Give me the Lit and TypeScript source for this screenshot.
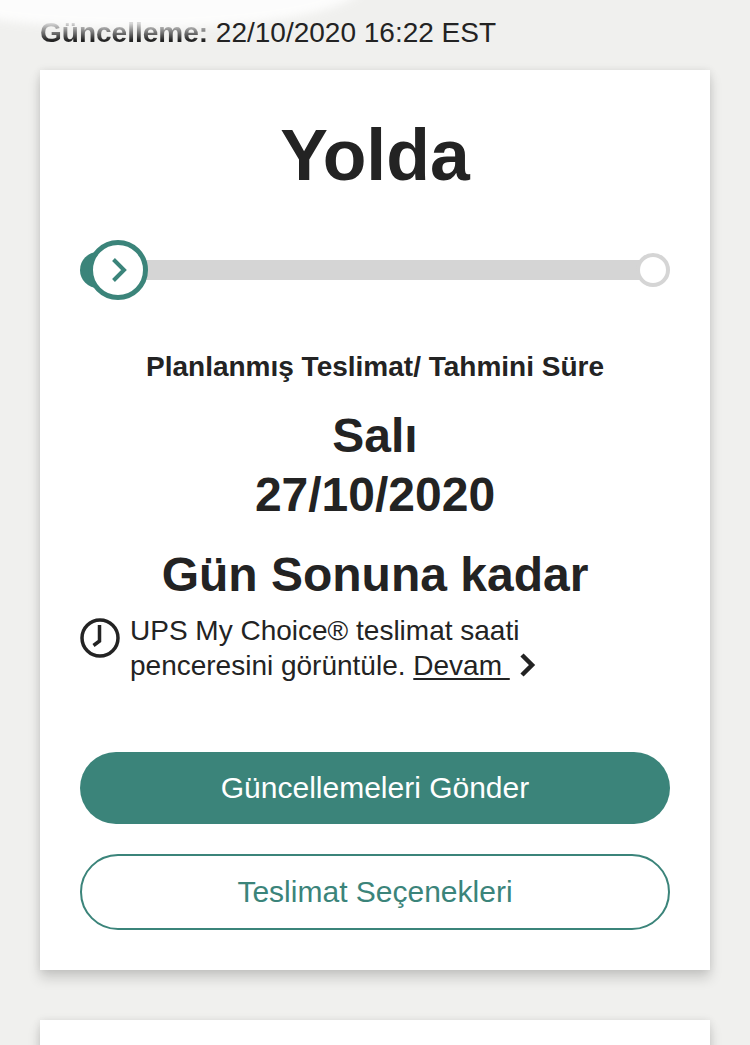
import { LitElement, html, css } from "lit";
import { customElement } from "lit/decorators.js";

@customElement("app-root")
export class AppRoot extends LitElement {
  static styles = css`
    :host {
      display: block;
      position: relative;
      height: 1045px;
      overflow: hidden;
      background: #f0f0ee;
      font-family: "Liberation Sans", Arial, sans-serif;
      color: #232323;
    }
    .smear {
      position: absolute;
      left: -30px;
      top: -30px;
      width: 395px;
      height: 58px;
      background: #fff;
      border-radius: 0 0 70% 60% / 0 0 100% 40%;
      filter: blur(5px);
      opacity: 0.85;
    }
    .updated {
      position: relative;
      padding: 17px 40px 0;
      height: 70px;
      box-sizing: border-box;
      font-size: 28px;
      line-height: 32px;
    }
    .updated b {
      background: linear-gradient(#d8d8d8 20%, #232323 75%);
      -webkit-background-clip: text;
      background-clip: text;
      color: transparent;
    }
    .card {
      background: #fff;
      margin: 0 40px;
      box-shadow: 0 8px 12px rgba(0, 0, 0, 0.16), 0 0 8px rgba(0, 0, 0, 0.08);
    }
    .main {
      height: 900px;
      box-sizing: border-box;
      padding: 45px 40px 0;
      text-align: center;
      position: relative;
    }
    .next {
      height: 60px;
      margin-top: 50px;
    }
    h1 {
      margin: 0;
      font-size: 71.5px;
      line-height: 80px;
      font-weight: 700;
    }
    .progress {
      position: relative;
      height: 60px;
      margin-top: 45px;
      display: flex;
      align-items: center;
    }
    .track {
      flex: 1;
      height: 20px;
      background: #d5d5d5;
      margin: 0 30px 0 10px;
    }
    .start {
      position: absolute;
      left: 0;
      top: 12px;
      width: 36px;
      height: 36px;
      border-radius: 50%;
      background: #3b847a;
    }
    .current {
      position: absolute;
      left: 8px;
      top: 0;
      width: 60px;
      height: 60px;
    }
    .end {
      position: absolute;
      right: 0;
      top: 13px;
      width: 34px;
      height: 34px;
      box-sizing: border-box;
      border-radius: 50%;
      border: 4px solid #d5d5d5;
      background: #fff;
    }
    .label {
      margin-top: 50px;
      font-size: 28px;
      line-height: 34px;
      font-weight: 700;
    }
    .date {
      margin-top: 22px;
      font-size: 48px;
      line-height: 59px;
      font-weight: 700;
    }
    .eod {
      margin-top: 21px;
      font-size: 48px;
      line-height: 59px;
      font-weight: 700;
    }
    .note {
      display: flex;
      gap: 10px;
      margin-top: 9px;
      text-align: left;
      font-size: 28px;
      line-height: 35px;
    }
    .note svg.clock {
      flex: none;
      width: 40px;
      height: 40px;
      margin-top: 5px;
    }
    .note u {
      text-underline-offset: 3px;
      text-decoration-thickness: 2px;
      white-space: pre;
    }
    .chev {
      display: inline-block;
      vertical-align: -3px;
      margin-left: 10px;
      width: 16px;
      height: 26px;
    }
    .btn {
      display: flex;
      align-items: center;
      justify-content: center;
      box-sizing: border-box;
      width: 100%;
      font-size: 30px;
    }
    .primary {
      margin-top: 69px;
      height: 72px;
      border-radius: 36px;
      background: #3b847a;
      color: #fff;
    }
    .secondary {
      margin-top: 30px;
      height: 76px;
      border: 2px solid #3b847a;
      color: #3b847a;
      background: #fff;
      border-radius: 38px;
    }
  `;

  render() {
    return html`
      <div class="smear"></div>
      <div class="updated"><b>Güncelleme:</b> 22/10/2020 16:22 EST</div>
      <div class="card main">
        <h1>Yolda</h1>
        <div class="progress">
          <div class="track"></div>
          <div class="start"></div>
          <svg class="current" viewBox="0 0 60 60">
            <circle cx="30" cy="30" r="27.5" fill="#fff" stroke="#3b847a" stroke-width="5"></circle>
            <path d="M25.5 19.5 L36 30 L25.5 40.5" fill="none" stroke="#3b847a" stroke-width="4"></path>
          </svg>
          <div class="end"></div>
        </div>
        <div class="label">Planlanmış Teslimat/ Tahmini Süre</div>
        <div class="date">Salı<br />27/10/2020</div>
        <div class="eod">Gün Sonuna kadar</div>
        <div class="note">
          <svg class="clock" viewBox="0 0 40 40">
            <circle cx="20" cy="20" r="18" fill="none" stroke="#232323" stroke-width="3.5"></circle>
            <path d="M19.5 7 V23 L13.5 27.5" fill="none" stroke="#232323" stroke-width="3.5"></path>
          </svg>
          <div>
            UPS My Choice® teslimat saati<br />
            penceresini görüntüle. <u>Devam </u><svg class="chev" viewBox="0 0 16 26">
              <path d="M2 3 L12 13 L2 23" fill="none" stroke="#232323" stroke-width="4.5"></path>
            </svg>
          </div>
        </div>
        <div class="btn primary">Güncellemeleri Gönder</div>
        <div class="btn secondary">Teslimat Seçenekleri</div>
      </div>
      <div class="card next"></div>
    `;
  }
}
